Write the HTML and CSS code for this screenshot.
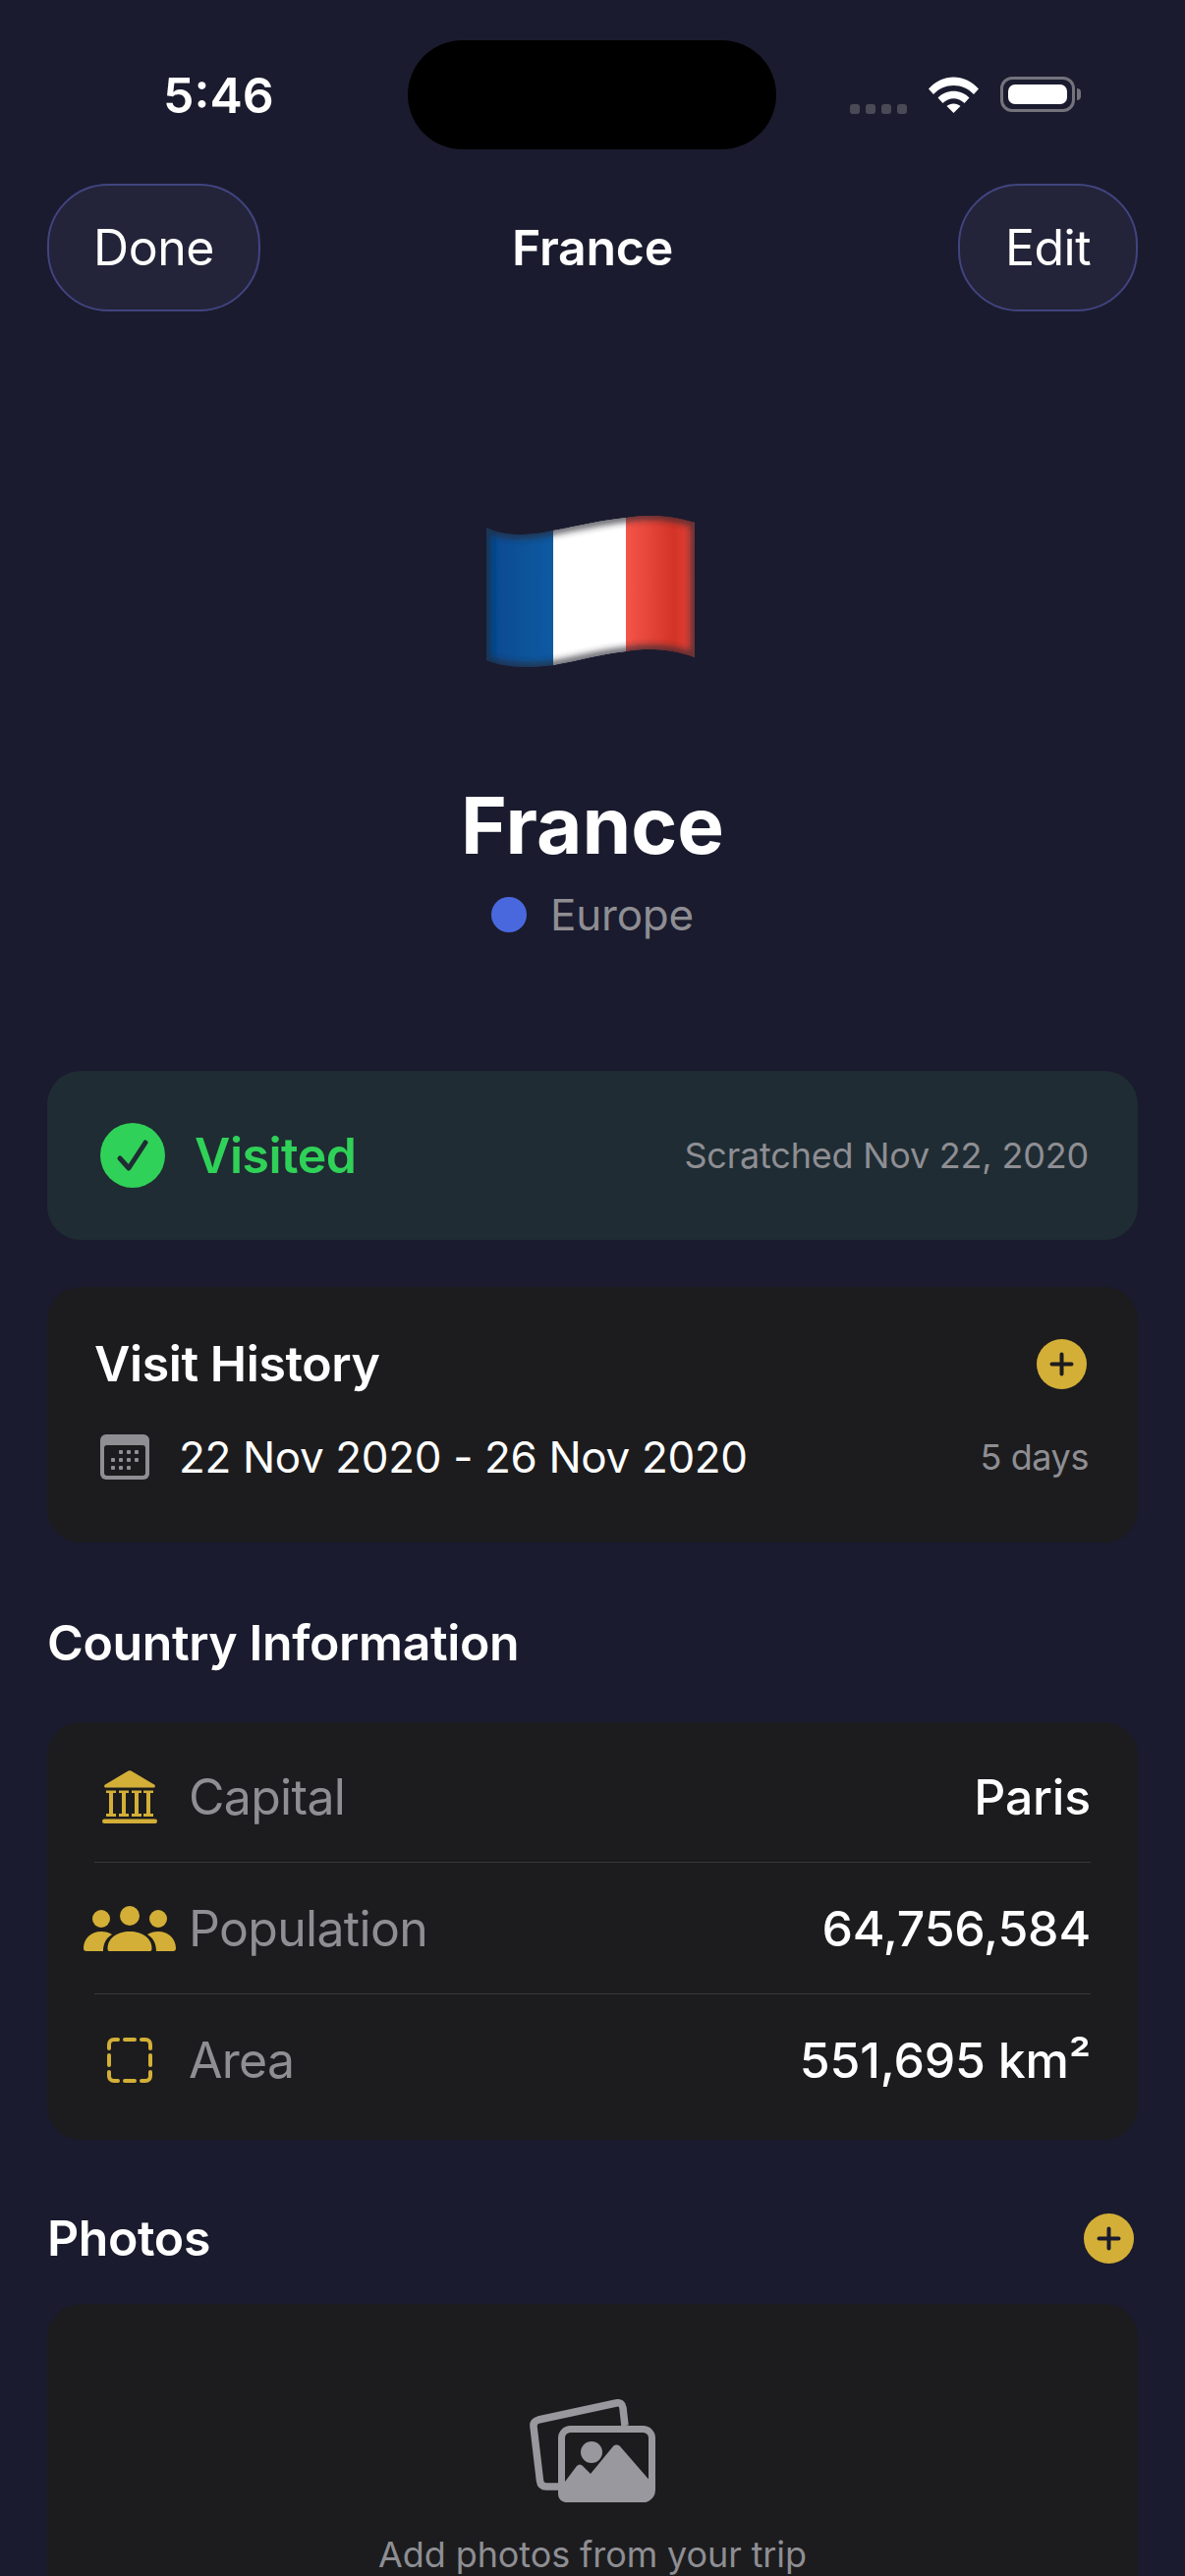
FILE: index.html
```html
<!DOCTYPE html>
<html lang="en">
<head>
  <meta charset="UTF-8">
  <title>France</title>
  <link rel="stylesheet" href="styles.css">
</head>
<body>
  <div class="status-bar">
    <span class="time">5:46</span>
    <div class="island"></div>
    <div class="status-icons">
      <div class="signal"><i></i><i></i><i></i><i></i></div>
      <svg class="wifi" viewBox="0 0 51 37">
        <path d="M0 12.500C14-3.500 37-3.500 51 12.500L46 18C35 6 16 6 5 18Z" fill="#fff"/>
        <path d="M9.500 21.500C18 12.500 33 12.500 41.500 21.500L36.500 27C30 20.500 21 20.500 14.500 27Z" fill="#fff"/>
        <path d="M18.500 30C22 26.500 29 26.500 32.500 30L25.500 37Z" fill="#fff"/>
      </svg>
      <div class="battery"><div class="battery-fill"></div></div>
      <div class="battery-nub"></div>
    </div>
  </div>

  <div class="nav">
    <button class="nav-btn done">Done</button>
    <span class="nav-title">France</span>
    <button class="nav-btn edit">Edit</button>
  </div>

  <div class="hero">
    <svg class="flag" viewBox="50 30 222 160">
      <defs>
        <clipPath id="flagShape">
          <path d="M55 47C75 57 100 55 123 50C150 45 170 40 197 37C220 33 245 35 267 42L267 179C245 171 220 169 197 173C170 176 150 182 123 187C100 190 75 190 55 182Z"/>
        </clipPath>
        <linearGradient id="blueStripe" x1="0" x2="1" y1="0" y2="0">
          <stop offset="0" stop-color="#03478f"/>
          <stop offset="0.5" stop-color="#0b5197"/>
          <stop offset="1" stop-color="#105ba3"/>
        </linearGradient>
        <linearGradient id="redStripe" x1="0" x2="1" y1="0" y2="0">
          <stop offset="0" stop-color="#f55549"/>
          <stop offset="0.65" stop-color="#d33327"/>
          <stop offset="1" stop-color="#e5483d"/>
        </linearGradient>
        <filter id="edgeBlur"><feGaussianBlur stdDeviation="3"/></filter>
        <filter id="softBlur"><feGaussianBlur stdDeviation="0.6"/></filter>
      </defs>
      <g clip-path="url(#flagShape)">
        <g filter="url(#softBlur)">
          <rect x="50" y="25" width="74" height="170" fill="url(#blueStripe)"/>
          <rect x="123" y="25" width="75" height="170" fill="#fff"/>
          <rect x="197" y="25" width="75" height="170" fill="url(#redStripe)"/>
        </g>
        <path d="M55 47C75 57 100 55 123 50C150 45 170 40 197 37C220 33 245 35 267 42L267 179C245 171 220 169 197 173C170 176 150 182 123 187C100 190 75 190 55 182Z" fill="none" stroke="#2a2a33" stroke-opacity="0.7" stroke-width="9" filter="url(#edgeBlur)"/>
      </g>
    </svg>
    <h1 class="country">France</h1>
    <div class="continent"><span class="dot"></span>Europe</div>
  </div>

  <div class="card status-card">
    <svg class="check" viewBox="0 0 66 66">
      <circle cx="33" cy="33" r="33" fill="#30d158"/>
      <path d="M20 36L29 46L46 20" fill="none" stroke="#1f2c33" stroke-width="5" stroke-linecap="round" stroke-linejoin="round"/>
    </svg>
    <span class="visited">Visited</span>
    <span class="scratched">Scratched Nov 22, 2020</span>
  </div>

  <div class="card history-card">
    <div class="history-head">
      <h2 class="title">Visit History</h2>
      <svg class="plus" viewBox="0 0 51 51">
        <circle cx="25.500" cy="25.500" r="25.500" fill="#d4af37"/>
        <path d="M25.500 15.500V35.500M15.500 25.500H35.500" stroke="#1c1c1e" stroke-width="4" stroke-linecap="round"/>
      </svg>
    </div>
    <div class="history-row">
      <svg class="calendar" viewBox="0 0 50 46">
        <rect width="50" height="46" rx="6" fill="#8e8e93"/>
        <rect x="4" y="11" width="42" height="31" rx="3" fill="#1c1c1e"/>
        <g fill="#8e8e93">
          <rect x="19" y="16" width="4" height="4" rx="1"/><rect x="27" y="16" width="4" height="4" rx="1"/><rect x="35" y="16" width="4" height="4" rx="1"/>
          <rect x="11" y="24" width="4" height="4" rx="1"/><rect x="19" y="24" width="4" height="4" rx="1"/><rect x="27" y="24" width="4" height="4" rx="1"/><rect x="35" y="24" width="4" height="4" rx="1"/>
          <rect x="11" y="32" width="4" height="4" rx="1"/><rect x="19" y="32" width="4" height="4" rx="1"/><rect x="27" y="32" width="4" height="4" rx="1"/>
        </g>
      </svg>
      <span class="dates">22 Nov 2020 - 26 Nov 2020</span>
      <span class="days">5 days</span>
    </div>
  </div>

  <h2 class="title section-title">Country Information</h2>

  <div class="card info-card">
    <div class="info-row">
      <div class="info-icon">
        <svg class="icon-capital" viewBox="0 0 56 54" fill="#d4af37">
          <path d="M26.500 .5C27.500 0 28.500 0 29.500 .5L53 14.500C54.500 15.500 54 17.500 52.500 17.500H3.500C2 17.500 1.500 15.500 3 14.500Z"/>
          <path d="M4 20.500H14V23H11V44H14V47H4V44H7V23H4ZM17 20.500H27V23H24V44H27V47H17V44H20V23H17ZM30 20.500H40V23H37V44H40V47H30V44H33V23H30ZM42 20.500H52V23H49V44H52V47H42V44H45V23H42Z"/>
          <rect y="49.500" width="56" height="4.500" rx="2.200"/>
        </svg>
      </div>
      <span class="info-label">Capital</span>
      <span class="info-value">Paris</span>
    </div>
    <div class="info-row">
      <div class="info-icon">
        <svg class="icon-people" viewBox="0 0 94 46" fill="#d4af37">
          <circle cx="18" cy="13" r="9"/>
          <circle cx="47" cy="10" r="10"/>
          <circle cx="76" cy="13" r="9"/>
          <path d="M26 46H47H68C68 46 69.500 46 69.500 43C69.500 33 60 26 47 26C34 26 24.500 33 24.500 43C24.500 46 26 46 26 46Z"/>
          <path d="M3 46H20C20 40 22 33 29 29C26 27 22 26 18 26C8 26 0 33 0 43C0 45 1 46 3 46Z"/>
          <path d="M91 46H74C74 40 72 33 65 29C68 27 72 26 76 26C86 26 94 33 94 43C94 45 93 46 91 46Z"/>
        </svg>
      </div>
      <span class="info-label">Population</span>
      <span class="info-value">64,756,584</span>
    </div>
    <div class="info-row">
      <div class="info-icon">
        <svg class="icon-area" viewBox="0 0 46 46" fill="none" stroke="#d4af37" stroke-width="4" stroke-linecap="round">
          <path d="M2 11V7C2 4 4 2 7 2H11"/>
          <path d="M18 2H28"/>
          <path d="M35 2H39C42 2 44 4 44 7V11"/>
          <path d="M44 18V28"/>
          <path d="M44 35V39C44 42 42 44 39 44H35"/>
          <path d="M28 44H18"/>
          <path d="M11 44H7C4 44 2 42 2 39V35"/>
          <path d="M2 28V18"/>
        </svg>
      </div>
      <span class="info-label">Area</span>
      <span class="info-value">551,695 km²</span>
    </div>
  </div>

  <div class="photos-head">
    <h2 class="title">Photos</h2>
    <svg class="plus" viewBox="0 0 51 51">
      <circle cx="25.500" cy="25.500" r="25.500" fill="#d4af37"/>
      <path d="M25.500 15.500V35.500M15.500 25.500H35.500" stroke="#1a1b2e" stroke-width="4" stroke-linecap="round"/>
    </svg>
  </div>

  <div class="card photos-card">
    <svg class="photos-icon" viewBox="0 0 128 105">
      <path d="M29 89H17C13 89 11 87 10.500 83L4 28C3.500 24 5.500 22 9 21L88 4C92 3 94.500 5 95 9L97 27" fill="none" stroke="#98989e" stroke-width="7.500" stroke-linejoin="round"/>
      <rect x="32.500" y="30.500" width="92" height="71" rx="9" fill="#1c1c1e" stroke="#98989e" stroke-width="7"/>
      <path d="M33 88L48 68C50 66 52 66 54 68L62 76L85 48C87 46 90 46 92 48L125 86V96C125 102 121 105 116 105H38C33 105 29 102 29 96V88Z" fill="#98989e"/>
      <ellipse cx="63" cy="54" rx="11" ry="11" fill="#98989e"/>
    </svg>
    <p class="photos-text">Add photos from your trip</p>
  </div>
</body>
</html>
```

FILE: styles.css
```css
* {
  box-sizing: border-box;
}
html, body {
  height: 2622px;
}
body {
  margin: 0;
  padding: 0 48px;
  overflow: hidden;
  background: #1a1b2e;
  color: #fff;
  font-family: Inter, "Liberation Sans", sans-serif;
}
h1, h2, p {
  margin: 0;
}

/* status bar */
.status-bar {
  height: 187px;
  margin: 0 -48px;
  padding: 41px 0 0 166px;
  display: flex;
  align-items: flex-start;
}
.time {
  width: 249px;
  margin-top: 28px;
  font-size: 50px;
  line-height: 56px;
  font-weight: 600;
}
.island {
  width: 375px;
  height: 111px;
  border-radius: 56px;
  background: #000;
}
.status-icons {
  margin: 37px 0 0 75px;
  display: flex;
  align-items: flex-start;
}
.signal {
  margin: 28px 22px 0 0;
  display: flex;
  gap: 6px;
}
.signal i {
  width: 10px;
  height: 10px;
  border-radius: 3px;
  background: #4a4a57;
}
.wifi {
  width: 51px;
  height: 37px;
  margin-right: 22px;
}
.battery {
  width: 76px;
  height: 36px;
  padding: 5px;
  border: 3px solid #73737c;
  border-radius: 12px;
}
.battery-fill {
  height: 100%;
  border-radius: 7px;
  background: #fff;
}
.battery-nub {
  width: 4px;
  height: 12px;
  margin: 12px 0 0 2px;
  border-radius: 0 4px 4px 0;
  background: #73737c;
}

/* nav */
.nav {
  height: 130px;
  display: flex;
  align-items: center;
  justify-content: space-between;
}
.nav-btn {
  height: 130px;
  padding: 0;
  background: #232439;
  border: 2px solid #424480;
  border-radius: 62px;
  color: #fff;
  font-family: inherit;
  font-size: 50px;
  letter-spacing: -0.5px;
}
.done {
  width: 217px;
}
.edit {
  width: 183px;
}
.nav-title {
  font-size: 50px;
  font-weight: 600;
  letter-spacing: -0.3px;
  margin-left: -34px;
}

/* flag and name */
.hero {
  height: 773px;
  padding-top: 203px;
  display: flex;
  flex-direction: column;
  align-items: center;
}
.flag {
  width: 222px;
  height: 160px;
  margin-right: 4px;
}
.country {
  margin-top: 112px;
  font-size: 80px;
  line-height: 96px;
  font-weight: 700;
}
.continent {
  margin-top: 16px;
  display: flex;
  align-items: center;
  gap: 24px;
  font-size: 44px;
  line-height: 54px;
  letter-spacing: -0.2px;
  color: #8e8e93;
}
.dot {
  width: 36px;
  height: 36px;
  border-radius: 50%;
  background: #4a68de;
}

/* cards */
.card {
  border-radius: 34px;
  background: #1c1c1e;
}
.status-card {
  height: 172px;
  padding: 0 50px 0 54px;
  display: flex;
  align-items: center;
  background: #1f2c33;
}
.check {
  width: 66px;
  height: 66px;
  margin-right: 30px;
}
.visited {
  font-size: 50px;
  font-weight: 600;
  letter-spacing: -0.5px;
  color: #30d158;
}
.scratched {
  margin-left: auto;
  font-size: 36px;
  letter-spacing: -0.2px;
  color: #8e8e93;
}
.history-card {
  height: 260px;
  margin-top: 48px;
  padding: 48px 52px 0 48px;
}
.history-head, .photos-head {
  display: flex;
  align-items: center;
  justify-content: space-between;
}
.title {
  font-size: 50px;
  line-height: 60px;
  font-weight: 600;
  letter-spacing: -0.4px;
}
.plus {
  width: 51px;
  height: 51px;
}
.history-row {
  margin: 38px -2px 0 0;
  display: flex;
  align-items: center;
}
.calendar {
  width: 50px;
  height: 46px;
  margin: 0 30px 0 6px;
}
.dates {
  font-size: 44px;
  letter-spacing: -0.35px;
}
.days {
  margin-left: auto;
  font-size: 36px;
  letter-spacing: -0.4px;
  color: #8e8e93;
}
.section-title {
  margin-top: 72px;
}
.info-card {
  height: 425px;
  margin-top: 51px;
  padding: 9px 48px 0;
}
.info-row {
  height: 134px;
  display: flex;
  align-items: center;
  border-bottom: 1px solid #38383a;
}
.info-row:last-child {
  border-bottom: none;
}
.info-icon {
  width: 72px;
  margin-right: 24px;
  display: flex;
  justify-content: center;
}
.icon-capital {
  width: 56px;
  height: 54px;
}
.icon-people {
  width: 94px;
  height: 46px;
  flex-shrink: 0;
}
.icon-area {
  width: 46px;
  height: 46px;
}
.info-label {
  font-size: 50px;
  letter-spacing: -0.7px;
  color: #8e8e93;
}
.info-value {
  margin-left: auto;
  font-size: 50px;
  font-weight: 500;
  letter-spacing: -0.2px;
}
.photos-head {
  margin-top: 70px;
  padding-right: 4px;
}
.photos-card {
  height: 400px;
  margin-top: 37px;
  padding-top: 97px;
  display: flex;
  flex-direction: column;
  align-items: center;
}
.photos-icon {
  width: 128px;
  height: 105px;
}
.photos-text {
  margin-top: 31px;
  font-size: 36px;
  line-height: 44px;
  letter-spacing: -0.1px;
  color: #8e8e93;
}
```
